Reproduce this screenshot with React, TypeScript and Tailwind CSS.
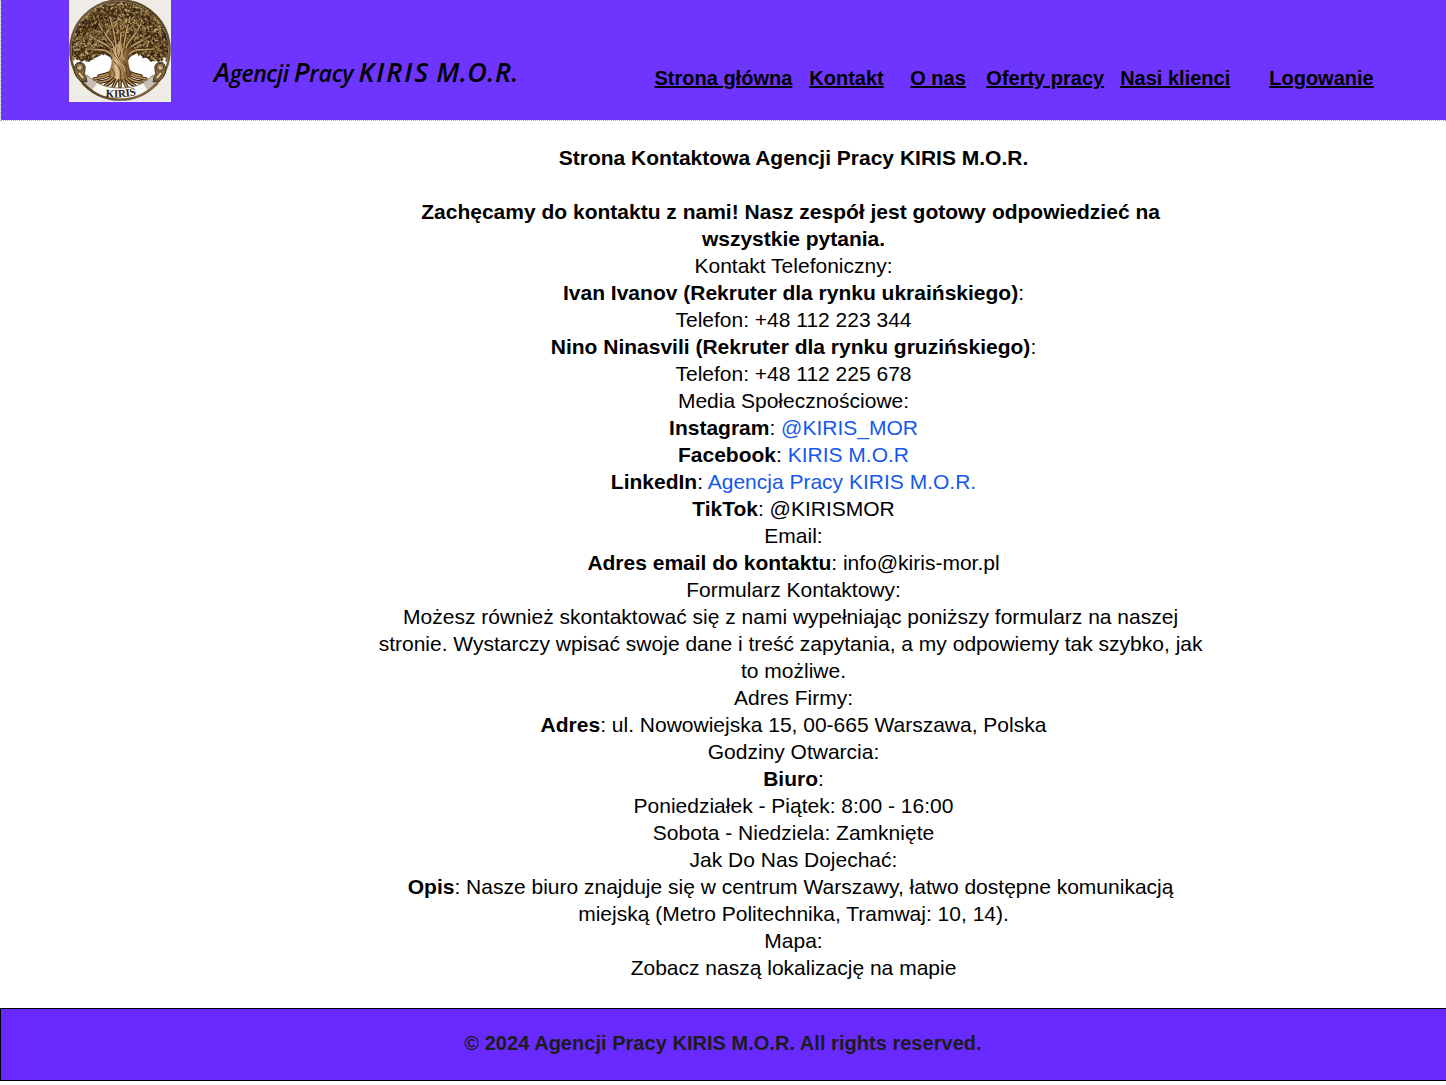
import type { ReactNode } from 'react';

const B = ({ children }: { children: ReactNode }) => <b className="font-bold">{children}</b>;
const A = ({ children }: { children: ReactNode }) => (
  <a href="#" className="text-[#1558ea]">{children}</a>
);

// Small deterministic generator, so that the foliage is the same on every render.
function makeRandom(seed: number) {
  let s = seed;
  return () => {
    s = (s * 16807) % 2147483647;
    return s / 2147483647;
  };
}

// The crown hangs low at the sides and arches up towards the trunk.
const crownBottom = (x: number) => 61.5 - 7 * Math.exp(-(((Math.abs(x - 51) - 16) / 11) ** 2));

const leafColors = ['#2a1c0d', '#5b4320', '#7e6235', '#947545', '#a98c5b', '#6b5029', '#3a2814', '#c0a673'];
const rand = makeRandom(4217);
const leaves = Array.from({ length: 3200 }, () => {
  const x = 2 + rand() * 98;
  const y = 1 + rand() * 60;
  return { x, y, r: 0.6 + rand() * 0.8, a: rand() * 180, c: leafColors[Math.floor(rand() * 8)], top: rand() < 0.3 };
}).filter((l) => (l.x - 51) ** 2 + (l.y - 50) ** 2 < 2330 && l.y < crownBottom(l.x));
const backLeaves = leaves.filter((l) => !l.top);
const frontLeaves = leaves.filter((l) => l.top && (l.x - 51) ** 2 + (l.y - 58) ** 2 > 620);

const branches = [
  'M51 60 C50 45 54 32 51 15',
  'M49 55 C46 42 46 34 41 17', 'M53 55 C56 42 56 34 61 17',
  'M47 55 C45 40 37 39 30 24', 'M55 55 C57 40 65 39 72 24',
  'M46 56 C41 43 31 43 21 36', 'M56 56 C61 43 71 43 81 36',
  'M45 59 C40 47 28 50 17 49', 'M57 59 C62 47 74 50 85 49',
];
const twigs = [
  'M37 41 C34 36 30 36 26 30', 'M65 41 C68 36 72 36 76 30',
  'M45 33 C43 28 37 26 35 20', 'M57 33 C59 28 65 26 67 20',
  'M33 45 C28 46 25 42 19 43', 'M69 45 C74 46 77 42 83 43',
  'M51 33 C48 28 48 23 46 19', 'M52 33 C55 28 55 23 57 19',
];
const roots = [
  'M45 65 C44 76 37 77 25 79', 'M57 65 C58 76 65 77 77 79',
  'M46 65 C46 78 40 82 29 82', 'M56 65 C56 78 62 82 73 82',
  'M48 65 C48 78 43 82 36 86', 'M54 65 C54 78 59 82 66 86',
  'M49 65 C51 77 46 83 44 87', 'M53 65 C51 77 56 83 58 87',
  'M51 65 V87',
  'M45 70 C41 74 35 75 30 76', 'M57 70 C61 74 67 75 72 76',
];

type Leaf = (typeof leaves)[number];
const Foliage = ({ items }: { items: Leaf[] }) => (
  <g>
    {items.map((l, i) => (
      <ellipse key={i} cx={l.x} cy={l.y} rx={l.r * 1.2} ry={l.r * 0.65} fill={l.c} transform={`rotate(${l.a} ${l.x} ${l.y})`} />
    ))}
  </g>
);

function Logo() {
  return (
    <svg viewBox="0 0 102 102" className="block size-[102px] shrink-0 bg-[#eeece7]">
      <defs>
        <linearGradient id="ring" x1="0" y1="0" x2="1" y2="1">
          <stop offset="0" stopColor="#786344" />
          <stop offset=".5" stopColor="#54401f" />
          <stop offset="1" stopColor="#8b7350" />
        </linearGradient>
        <linearGradient id="bark" x1="0" x2="1">
          <stop offset="0" stopColor="#6b4923" />
          <stop offset=".35" stopColor="#d9bb87" />
          <stop offset=".6" stopColor="#a47c48" />
          <stop offset="1" stopColor="#59391a" />
        </linearGradient>
        <clipPath id="disc"><circle cx="51" cy="50" r="48.5" /></clipPath>
      </defs>
      <circle cx="51" cy="50" r="49.3" fill="#fff" />
      <g clipPath="url(#disc)">
        <path d="M0 0H102V55L98 58L94 57L90 62L86 60L82 62L78 58L74 57L70 54L66 54L61 57L57 64H45L41 57L36 54L32 54L28 57L24 58L20 62L16 60L12 62L8 57L4 58L0 55Z" fill="#3f2d17" />
        <Foliage items={backLeaves} />
      </g>
      <g fill="none" strokeLinecap="round">
        {twigs.map((d) => <path key={d} d={d} stroke="#b3925f" strokeWidth=".9" />)}
        {branches.map((d) => <path key={d} d={d} stroke="#3a2410" strokeWidth="3.2" />)}
        {branches.map((d) => <path key={d} d={d} stroke="#bd9c68" strokeWidth="1.7" />)}
        {roots.map((d) => <path key={d} d={d} stroke="#3b230e" strokeWidth="3.6" />)}
        {roots.map((d) => <path key={d} d={d} stroke="#b3905b" strokeWidth="1.6" />)}
      </g>
      <Foliage items={frontLeaves} />
      <path d="M39 47C45 57 43 66 39 74C45 81 57 81 63 74C59 66 57 57 63 47C56 50 54 46 51 40C48 46 46 50 39 47Z" fill="url(#bark)" />
      <g fill="none" strokeWidth=".9" strokeLinecap="round">
        <path d="M43 50C46 60 57 63 58 75M48 47C46 57 52 61 55 65M45 62C51 66 53 71 51 81M56 49C51 56 55 61 58 67M43 69C46 72 46 76 44 79M54 46C52 50 52 54 50 57" stroke="#4d3014" />
        <path d="M46 53C48 60 55 63 56 71M46 66C49 70 50 74 48 80M53 48C52 55 54 57 55 60" stroke="#ecd4a5" />
      </g>
      <path d="M18 75C29 86 41 88 51 88C62 88 73 86 84 75L89 84C76 97 64 99.500 51 99.500C38 99.500 26 97 13 84Z" fill="#faf8f3" stroke="#71583a" strokeWidth=".8" />
      <path d="M18 75L28 83L23 91L13 83ZM84 75L74 83L79 91L89 83Z" fill="#aaa092" opacity=".65" />
      <circle cx="51" cy="50" r="49.6" fill="none" stroke="url(#ring)" strokeWidth="2.4" />
      {[false, true].map((flip) => (
        <g key={String(flip)} transform={flip ? 'translate(102 0) scale(-1 1)' : undefined}>
          <path d="M6 66C7 61 14 61 16 66C17 70 14 72 17 77L18 82L12 81C6 77 4 71 6 66Z" fill="#80643f" stroke="#3d2a18" strokeWidth=".9" />
          <circle cx="11" cy="67" r="3.6" fill="#d1b78c" stroke="#3b2918" strokeWidth=".9" />
          <path d="M9 67A2.2 2.2 0 1 1 12 69M8 73C10 78 14 80 17 81" fill="none" stroke="#604728" strokeWidth="1" />
          <path d="M10 73L14 78" stroke="#e7d3ac" strokeWidth="1.7" />
        </g>
      ))}
      <path id="motto" d="M34 96.500Q51 99 70 94.500" fill="none" />
      <text className="font-['Liberation_Serif'] text-[11px] font-bold" fill="#29241f">
        <textPath href="#motto" startOffset="50%" textAnchor="middle">KIRIS</textPath>
      </text>
    </svg>
  );
}

const lines: ReactNode[] = [
  <B>Strona Kontaktowa Agencji Pracy KIRIS M.O.R.</B>,
  '\u00a0',
  <B>Zachęcamy do kontaktu z nami! Nasz zespół jest gotowy odpowiedzieć na{'\u00a0'}</B>,
  <B>wszystkie pytania.</B>,
  'Kontakt Telefoniczny:',
  <><B>Ivan Ivanov (Rekruter dla rynku ukraińskiego)</B>:</>,
  'Telefon: +48 112 223 344',
  <><B>Nino Ninasvili (Rekruter dla rynku gruzińskiego)</B>:</>,
  'Telefon: +48 112 225 678',
  'Media Społecznościowe:',
  <><B>Instagram</B>: <A>@KIRIS_MOR</A></>,
  <><B>Facebook</B>: <A>KIRIS M.O.R</A></>,
  <><B>LinkedIn</B>: <A>Agencja Pracy KIRIS M.O.R.</A></>,
  <><B>TikTok</B>: @KIRISMOR</>,
  'Email:',
  <><B>Adres email do kontaktu</B>: info@kiris-mor.pl</>,
  'Formularz Kontaktowy:',
  'Możesz również skontaktować się z nami wypełniając poniższy formularz na naszej\u00a0',
  'stronie. Wystarczy wpisać swoje dane i treść zapytania, a my odpowiemy tak szybko, jak\u00a0',
  'to możliwe.',
  'Adres Firmy:',
  <><B>Adres</B>: ul. Nowowiejska 15, 00-665 Warszawa, Polska</>,
  'Godziny Otwarcia:',
  <><B>Biuro</B>:</>,
  'Poniedziałek - Piątek: 8:00 - 16:00',
  'Sobota - Niedziela: Zamknięte',
  'Jak Do Nas Dojechać:',
  <><B>Opis</B>: Nasze biuro znajduje się w centrum Warszawy, łatwo dostępne komunikacją{'\u00a0'}</>,
  'miejską (Metro Politechnika, Tramwaj: 10, 14).',
  'Mapa:',
  'Zobacz naszą lokalizację na mapie',
];

const nav = [
  { label: 'Strona główna', style: 'ml-[135.5px]' },
  { label: 'Kontakt', style: 'ml-[17px]' },
  { label: 'O nas', style: 'ml-[26.5px]' },
  { label: 'Oferty pracy', style: 'ml-[20.5px]' },
  { label: 'Nasi klienci', style: 'ml-4' },
  { label: 'Logowanie', style: 'ml-[39px]' },
];

export default function App() {
  return (
    <div className="h-[1085px] w-[1446px] overflow-hidden bg-white font-['Liberation_Sans',Arial,sans-serif] text-black">
      <header className="flex h-[121px] items-start border-b border-l border-dotted border-[#b5adce] bg-[#6e35ff] bg-clip-padding pl-[68px]">
        <Logo />
        <h1 className="mt-[54px] ml-[43px] flex w-[305px] items-baseline whitespace-nowrap font-['Open_Sans',sans-serif] text-[27px] leading-9 font-semibold italic">
          <span className="w-[81px] text-[23px] tracking-[-0.4px]"><span className="text-[27px]">A</span>gencji</span>
          <span className="w-[66px] text-[23px] tracking-[-0.2px]"><span className="text-[27px]">P</span>racy</span>
          <span className="w-[79px] tracking-[2px]">KIRIS</span>
          <span className="tracking-[0.4px]">M.O.R.</span>
        </h1>
        <nav className="mt-[66px] flex text-[20px] leading-6 font-bold">
          {nav.map((n) => (
            <a key={n.label} href="#" className={`whitespace-nowrap underline ${n.style}`}>{n.label}</a>
          ))}
        </nav>
      </header>
      <main className="ml-[370px] h-[887px] w-[847px] pt-[23px] text-center text-[21px] leading-[27px]">
        {lines.map((line, i) => <p key={i} className="h-[27px] whitespace-nowrap">{line}</p>)}
      </main>
      <footer className="flex h-[73px] items-center justify-center border-y border-l border-black bg-[#682aff] pr-px pb-1 text-[20px] font-bold tracking-[0.03px] text-[#1c1c1c]">
        © 2024 Agencji Pracy KIRIS M.O.R. All rights reserved.
      </footer>
    </div>
  );
}
